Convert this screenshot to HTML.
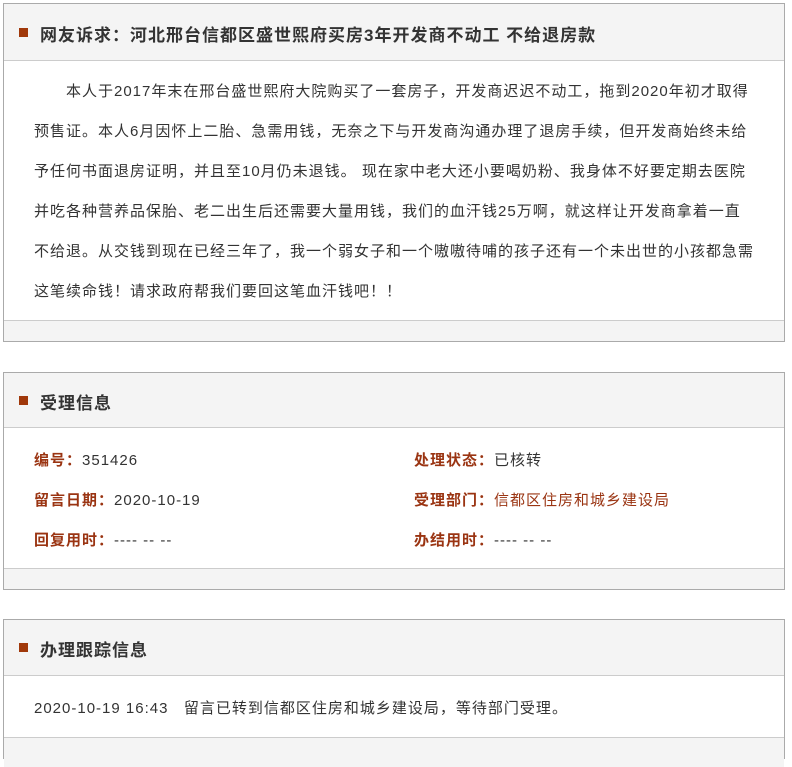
<!DOCTYPE html>
<html><head><meta charset="utf-8"><style>
*{margin:0;padding:0;box-sizing:border-box}
body{width:792px;height:743px;background:#fff;position:relative;overflow:hidden;font-family:"Liberation Sans","Noto Sans CJK SC",sans-serif;color:#333;letter-spacing:1px}
.box{position:absolute;left:3px;width:782px;border:1px solid #aaa;background:#fff}
.hd{position:absolute;left:0;right:0;top:0;background:#f4f4f4;border-bottom:1px solid #ccc}
.hd span.sq{position:absolute;left:15px;width:9px;height:9px;background:#a0380a}
.hd b{position:absolute;left:36px;font-size:17px;color:#333;white-space:nowrap}
.ft{position:absolute;left:0;right:0;bottom:0;background:#f4f4f4;border-top:1px solid #ccc}
.t{position:absolute;font-size:15px;white-space:nowrap;color:#333}
.l{color:#9a3412;font-weight:bold}
</style></head><body>
<div class="box" style="top:3px;height:339px">
 <div class="hd" style="height:57px"><span class="sq" style="top:24px"></span><b style="top:17px">网友诉求：河北邢台信都区盛世熙府买房3年开发商不动工 不给退房款</b></div>
 <div class="t" style="left:62px;top:76px">本人于2017年末在邢台盛世熙府大院购买了一套房子，开发商迟迟不动工，拖到2020年初才取得</div>
 <div class="t" style="left:30px;top:116px">预售证。本人6月因怀上二胎、急需用钱，无奈之下与开发商沟通办理了退房手续，但开发商始终未给</div>
 <div class="t" style="left:30px;top:156px">予任何书面退房证明，并且至10月仍未退钱。 现在家中老大还小要喝奶粉、我身体不好要定期去医院</div>
 <div class="t" style="left:30px;top:196px">并吃各种营养品保胎、老二出生后还需要大量用钱，我们的血汗钱25万啊，就这样让开发商拿着一直</div>
 <div class="t" style="left:30px;top:236px">不给退。从交钱到现在已经三年了，我一个弱女子和一个嗷嗷待哺的孩子还有一个未出世的小孩都急需</div>
 <div class="t" style="left:30px;top:276px">这笔续命钱！请求政府帮我们要回这笔血汗钱吧！！</div>
 <div class="ft" style="height:21px"></div>
</div>
<div class="box" style="top:372px;height:218px">
 <div class="hd" style="height:55px"><span class="sq" style="top:23px"></span><b style="top:16px">受理信息</b></div>
 <div class="t" style="left:30px;top:76px"><span class="l">编号：</span>351426</div>
 <div class="t" style="left:30px;top:116px"><span class="l">留言日期：</span>2020-10-19</div>
 <div class="t" style="left:30px;top:156px"><span class="l">回复用时：</span>---- -- --</div>
 <div class="t" style="left:410px;top:76px"><span class="l">处理状态：</span>已核转</div>
 <div class="t" style="left:410px;top:116px"><span class="l">受理部门：</span><span style="color:#9a3412">信都区住房和城乡建设局</span></div>
 <div class="t" style="left:410px;top:156px"><span class="l">办结用时：</span>---- -- --</div>
 <div class="ft" style="height:21px"></div>
</div>
<div class="box" style="top:619px;height:140px">
 <div class="hd" style="height:56px"><span class="sq" style="top:23px"></span><b style="top:16px">办理跟踪信息</b></div>
 <div class="t" style="left:30px;top:77px">2020-10-19 16:43&nbsp;&nbsp;&nbsp;留言已转到信都区住房和城乡建设局，等待部门受理。</div>
 <div class="ft" style="top:117px;height:30px"></div>
</div>
</body></html>
